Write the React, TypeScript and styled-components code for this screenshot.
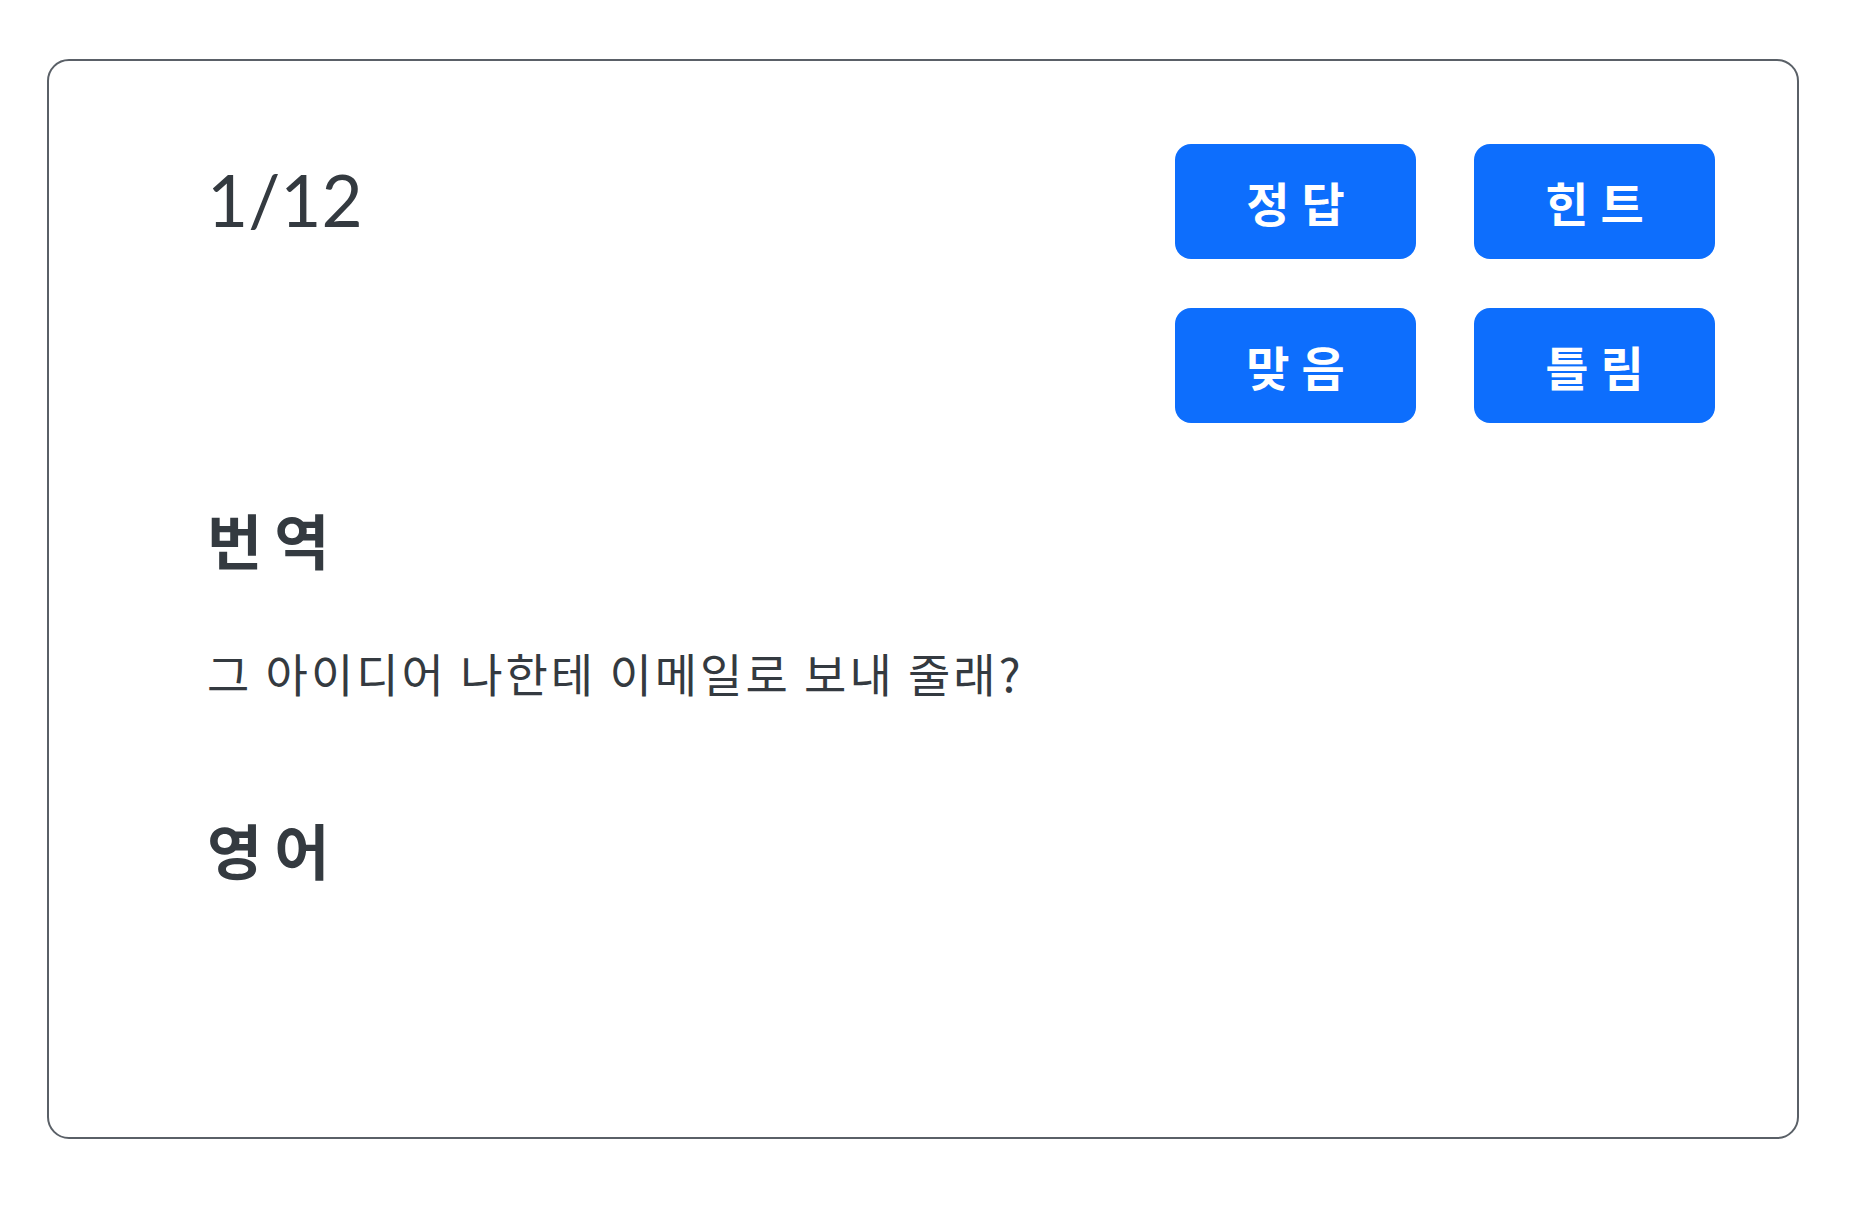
import styled, { createGlobalStyle } from 'styled-components';

const GlobalStyle = createGlobalStyle`
  html, body {
    margin: 0;
    padding: 0;
    background: #ffffff;
  }
  body {
    font-family: Lato, "Noto Sans CJK KR", sans-serif;
    color: #343a40;
  }
`;

const Page = styled.div`
  padding: 59px 61px 70px 47px;
`;

const Card = styled.div`
  box-sizing: border-box;
  min-height: 1080px;
  border: 2px solid #5a6067;
  border-radius: 22px;
  padding: 83px 82px 40px 158px;
`;

const TopRow = styled.div`
  display: flex;
  justify-content: space-between;
  align-items: flex-start;
`;

const Counter = styled.div`
  font-family: Lato, sans-serif;
  font-size: 71px;
  line-height: 1;
  padding-top: 20px;
  color: #343a40;
`;

const ButtonGrid = styled.div`
  display: grid;
  grid-template-columns: 241px 241px;
  grid-auto-rows: 115px;
  column-gap: 58px;
  row-gap: 49px;
`;

const ActionButton = styled.button`
  border: none;
  border-radius: 16px;
  background: #0d6efd;
  color: #ffffff;
  font-family: "Noto Sans CJK KR", sans-serif;
  font-weight: 700;
  font-size: 47px;
  letter-spacing: 12px;
  padding: 0 0 0 12px;
  line-height: 1;
  cursor: pointer;
`;

const SectionTitle = styled.h2<{ $gap: number }>`
  margin: ${(p) => p.$gap}px 0 0;
  font-family: "Noto Sans CJK KR", sans-serif;
  font-weight: 700;
  font-size: 60px;
  letter-spacing: 12px;
  line-height: 1;
  color: #343a40;
`;

const Sentence = styled.p`
  margin: 80px 0 0;
  font-family: "Noto Sans CJK KR", sans-serif;
  font-size: 46px;
  letter-spacing: 3px;
  line-height: 1;
  color: #343a40;
`;

const actions = ['정답', '힌트', '맞음', '틀림'];

export default function App() {
  return (
    <>
      <GlobalStyle />
      <Page>
        <Card>
          <TopRow>
            <Counter>1/12</Counter>
            <ButtonGrid>
              {actions.map((a) => (
                <ActionButton key={a}>{a}</ActionButton>
              ))}
            </ButtonGrid>
          </TopRow>
          <SectionTitle $gap={86}>번역</SectionTitle>
          <Sentence>그 아이디어 나한테 이메일로 보내 줄래?</Sentence>
          <SectionTitle $gap={124}>영어</SectionTitle>
        </Card>
      </Page>
    </>
  );
}
